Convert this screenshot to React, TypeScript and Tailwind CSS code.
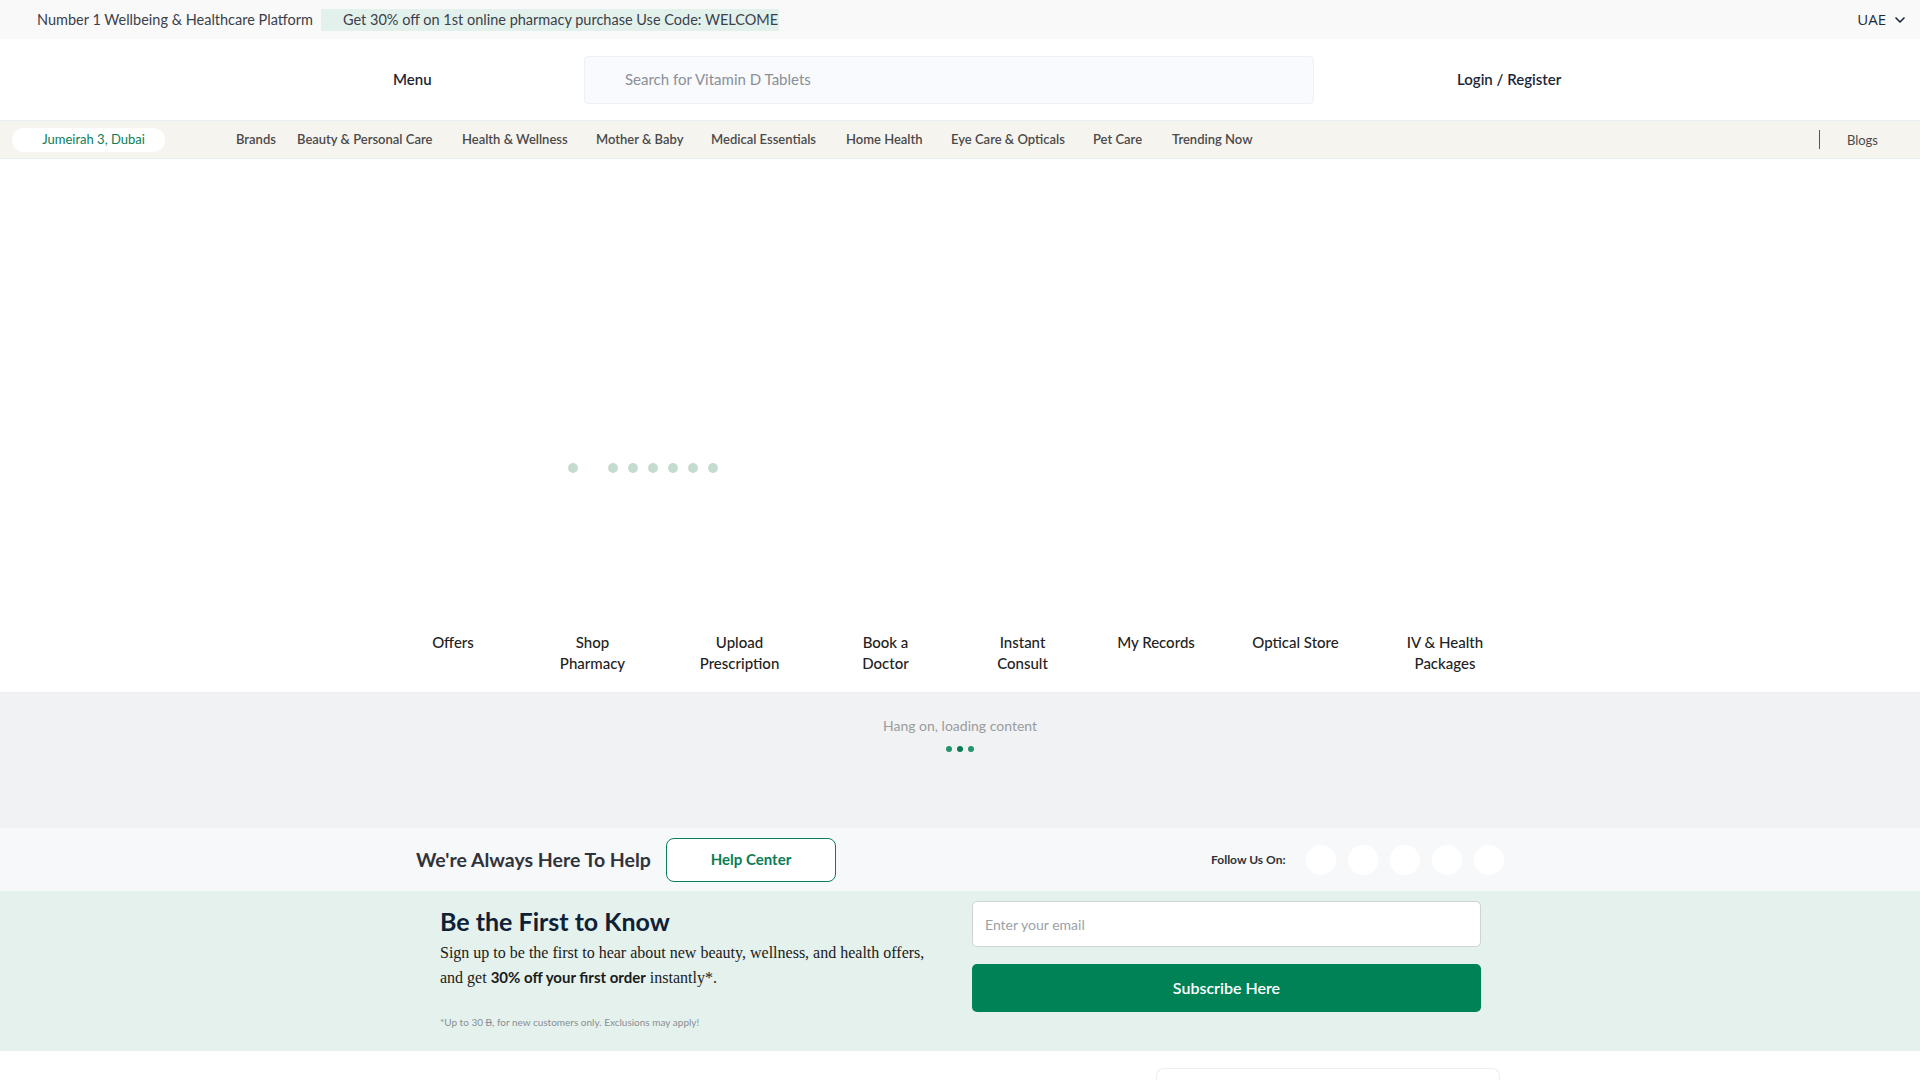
import { ChevronDown } from 'lucide-react';

const navItems = [
  { label: 'Brands', w: 'w-[61px]' },
  { label: 'Beauty & Personal Care', w: 'w-[165px]' },
  { label: 'Health & Wellness', w: 'w-[134px]' },
  { label: 'Mother & Baby', w: 'w-[115px]' },
  { label: 'Medical Essentials', w: 'w-[135px]' },
  { label: 'Home Health', w: 'w-[105px]' },
  { label: 'Eye Care & Opticals', w: 'w-[142px]' },
  { label: 'Pet Care', w: 'w-[79px]' },
  { label: 'Trending Now', w: 'w-[100px]' },
];

const quickLinks = [
  { lines: ['Offers'], w: 'w-[136px]' },
  { lines: ['Shop', 'Pharmacy'], w: 'w-[143px]' },
  { lines: ['Upload', 'Prescription'], w: 'w-[151px]' },
  { lines: ['Book a', 'Doctor'], w: 'w-[141px]' },
  { lines: ['Instant', 'Consult'], w: 'w-[133px]' },
  { lines: ['My Records'], w: 'w-[134px]' },
  { lines: ['Optical Store'], w: 'w-[145px]' },
  { lines: ['IV & Health', 'Packages'], w: 'w-[154px]' },
];

export default function App() {
  return (
    <div className="w-[1920px] h-[1080px] overflow-hidden bg-white font-['Lato',sans-serif]">
      {/* promo strip */}
      <div className="h-[39px] bg-[#f9f9f9] flex items-center text-[14.5px] text-[#3b3f4a] whitespace-nowrap">
        <span className="pl-[37px] w-[321px]">Number 1 Wellbeing &amp; Healthcare Platform</span>
        <span className="h-[22px] flex items-center bg-[#e3f1ec] pl-[22px] pr-[1px]">
          Get 30% off on 1st online pharmacy purchase Use Code: WELCOME
        </span>
        <span className="ml-auto flex items-center gap-[6px] pr-[12px] text-[15px] text-[#1e2a3a] font-['Open_Sans',sans-serif]">
          UAE
          <ChevronDown className="w-[16px] h-[16px]" strokeWidth={2.5} />
        </span>
      </div>

      {/* header */}
      <div className="h-[81px] flex items-center pl-[393px]">
        <span className="w-[191px] text-[15px] font-semibold text-[#1b2635]">Menu</span>
        <div className="w-[730px] h-[48px] rounded-[4px] bg-[#f8fafd] border border-[#edf0f5] flex items-center pl-[40px] text-[15px] text-[#8a8f98]">
          Search for Vitamin D Tablets
        </div>
        <span className="ml-[143px] text-[15px] font-semibold text-[#1b2635]">Login / Register</span>
      </div>

      {/* category bar */}
      <div className="h-[39px] bg-[#f6f4ef] border-y border-[#e8eef3] flex items-center text-[13px] text-[#4a4a4a] font-semibold">
        <div className="ml-[12px] w-[153px] h-[24px] rounded-full bg-white flex items-center justify-center pl-[10px] text-[#0b7d57] font-normal">
          Jumeirah 3, Dubai
        </div>
        <div className="ml-[71px] flex">
          {navItems.map((n) => (
            <span key={n.label} className={`${n.w} whitespace-nowrap`}>
              {n.label}
            </span>
          ))}
        </div>
        <div className="ml-auto w-px h-[19px] bg-[#555]" />
        <span className="ml-[27px] mr-[42px] mt-[2px] font-normal">Blogs</span>
      </div>

      {/* banner + quick links */}
      <div className="h-[534px] flex flex-col border-b border-[#eceef1]">
        <div className="pt-[304px] pl-[568px] flex gap-[10px]">
          {Array.from({ length: 8 }).map((_, i) => (
            <span
              key={i}
              className={i === 1 ? 'w-[10px] h-[10px] rounded-full bg-white' : 'w-[10px] h-[10px] rounded-full bg-[#c4dccf]'}
            />
          ))}
        </div>
        <div className="mt-[159px] pl-[385px] flex text-[15px] leading-[21px] text-[#222] font-medium">
          {quickLinks.map((q) => (
            <div key={q.lines.join(' ')} className={`${q.w} text-center`}>
              {q.lines.map((l) => (
                <div key={l}>{l}</div>
              ))}
            </div>
          ))}
        </div>
      </div>

      {/* loading */}
      <div className="h-[135px] bg-[#f1f2f4] flex flex-col items-center pt-[23px]">
        <span className="text-[14px] leading-[20px] text-[#9b9b9b]">Hang on, loading content</span>
        <div className="mt-[10px] flex gap-[5px]">
          <span className="w-[6px] h-[6px] rounded-full bg-[#23946b]" />
          <span className="w-[6px] h-[6px] rounded-full bg-[#087c55]" />
          <span className="w-[6px] h-[6px] rounded-full bg-[#23946b]" />
        </div>
      </div>

      {/* help row */}
      <div className="h-[63px] bg-[#f7f8fa] flex items-center">
        <span className="pl-[416px] w-[666px] text-[19.5px] font-bold text-[#30343a]">We're Always Here To Help</span>
        <button className="w-[170px] h-[44px] rounded-[8px] border border-[#0b7d57] bg-white text-[15px] font-bold text-[#0b7d57]">
          Help Center
        </button>
        <span className="ml-[375px] w-[95px] text-[12px] font-bold text-[#2e3238]">Follow Us On:</span>
        <div className="flex gap-[12px]">
          {Array.from({ length: 5 }).map((_, i) => (
            <span key={i} className="w-[30px] h-[30px] rounded-full bg-white" />
          ))}
        </div>
      </div>

      {/* newsletter */}
      <div className="h-[160px] bg-[#e4f1ec] flex">
        <div className="pl-[440px] w-[972px] pt-[15px]">
          <h2 className="text-[25px] leading-[30px] font-bold text-[#0f2137]">Be the First to Know</h2>
          <p className="mt-[5px] text-[16px] leading-[24px] text-[#1a1a1a] font-['Liberation_Serif',serif]">
            Sign up to be the first to hear about new beauty, wellness, and health offers,
            <br />
            and get <b className="font-['Lato',sans-serif] font-bold text-[15px]">30% off your first order</b> instantly*.
          </p>
          <p className="mt-[25px] text-[10px] leading-[14px] text-[#8a8f95]">
            *Up to 30 <span className="line-through">B</span>, for new customers only. Exclusions may apply!
          </p>
        </div>
        <div className="pt-[10px]">
          <div className="w-[509px] h-[46px] rounded-[5px] bg-white border border-[#d0d4d8] flex items-center pl-[12px] text-[14px] text-[#9aa1a8]">
            Enter your email
          </div>
          <button className="mt-[17px] w-[509px] h-[48px] rounded-[5px] bg-[#008257] text-white text-[16px] font-semibold">
            Subscribe Here
          </button>
        </div>
      </div>

      {/* footer start */}
      <div className="h-[29px] pt-[17px] pl-[1156px]">
        <div className="w-[344px] h-[20px] rounded-t-[8px] border-t border-x border-[#eceef1]" />
      </div>
    </div>
  );
}
